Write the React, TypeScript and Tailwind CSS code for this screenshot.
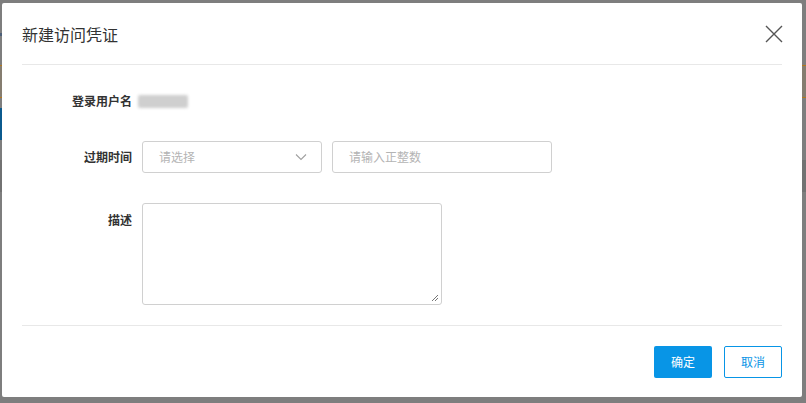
import React from "react";

const font = { fontFamily: '"Noto Sans CJK SC", "Noto Sans", sans-serif' };

function CloseIcon() {
  return (
    <svg width="18" height="18" viewBox="0 0 18 18" fill="none">
      <path d="M1 1L17 17M17 1L1 17" stroke="#555" strokeWidth="1.4" />
    </svg>
  );
}

function Chevron() {
  return (
    <svg width="12" height="8" viewBox="0 0 12 8" fill="none">
      <path d="M1 1.5L6 6.5L11 1.5" stroke="#a0a0a0" strokeWidth="1.1" />
    </svg>
  );
}

function ResizeGrip() {
  return (
    <svg width="8" height="8" viewBox="0 0 8 8" className="absolute right-[2px] bottom-[2px]">
      <path d="M7 1L1 7M7 4L4 7" stroke="#777" strokeWidth="1" />
    </svg>
  );
}

export default function App() {
  return (
    <div className="relative w-[806px] h-[403px] overflow-hidden bg-[#7e7e7e]" style={font}>
      {/* page underneath the modal mask */}
      <div className="flex flex-col">
        <div className="h-[33px]" />
        <div className="h-[3px] w-[10px] bg-[#4d5f78]" />
        <div className="h-[29px]" />
        <div className="h-[33px] bg-[#857d70] border-y border-[#b5781c]" />
        <div className="h-[10px]" />
        <div className="h-[32px] w-[12px] bg-[#0b5a8e]" />
        <div className="h-[20px]" />
        <div className="h-[32px] bg-[#727272]" />
      </div>

      {/* dialog */}
      <div className="absolute left-[2px] top-[3px] w-[800px] h-[394px] bg-white rounded-[2px] flex flex-col">
        <div className="mx-[20px] h-[62px] flex items-center justify-between border-b border-[#e8e8e8]">
          <span className="text-[16px] text-[#333] leading-none">新建访问凭证</span>
          <button className="w-[18px] h-[18px] -mr-[1px] mt-[1px] flex items-center justify-center">
            <CloseIcon />
          </button>
        </div>

        <div className="flex flex-col pt-[20px]">
          <div className="flex items-center h-[32px]">
            <label className="w-[130px] text-right text-[12px] font-bold text-[#333]">登录用户名</label>
            <span className="ml-[6px] w-[50px] h-[13px] bg-[#cfcfcf] blur-[1.5px] rounded-[2px]" />
          </div>

          <div className="flex items-center h-[32px] mt-[24px]">
            <label className="w-[130px] text-right text-[12px] font-bold text-[#333]">过期时间</label>
            <div className="ml-[10px] w-[180px] h-[32px] border border-[#d0d0d0] rounded-[3px] flex items-center justify-between pl-[16px] pr-[14px]">
              <span className="text-[12px] text-[#b4b4b4]">请选择</span>
              <Chevron />
            </div>
            <div className="ml-[10px] w-[220px] h-[32px] border border-[#d0d0d0] rounded-[3px] flex items-center pl-[16px]">
              <span className="text-[12px] text-[#b4b4b4]">请输入正整数</span>
            </div>
          </div>

          <div className="flex items-start mt-[30px]">
            <label className="w-[130px] text-right text-[12px] font-bold text-[#333] mt-[8px]">描述</label>
            <div className="relative ml-[10px] w-[300px] h-[102px] border border-[#d0d0d0] rounded-[3px]">
              <ResizeGrip />
            </div>
          </div>
        </div>

        <div className="mx-[20px] mt-[20px] border-t border-[#e8e8e8]" />

        <div className="flex justify-end gap-[12px] px-[20px] pt-[20px]">
          <button className="w-[58px] h-[32px] rounded-[2px] bg-[#0895e6] text-white text-[12px]">确定</button>
          <button className="w-[58px] h-[32px] rounded-[2px] border border-[#0895e6] text-[#0895e6] text-[12px] bg-white">取消</button>
        </div>
      </div>
    </div>
  );
}
